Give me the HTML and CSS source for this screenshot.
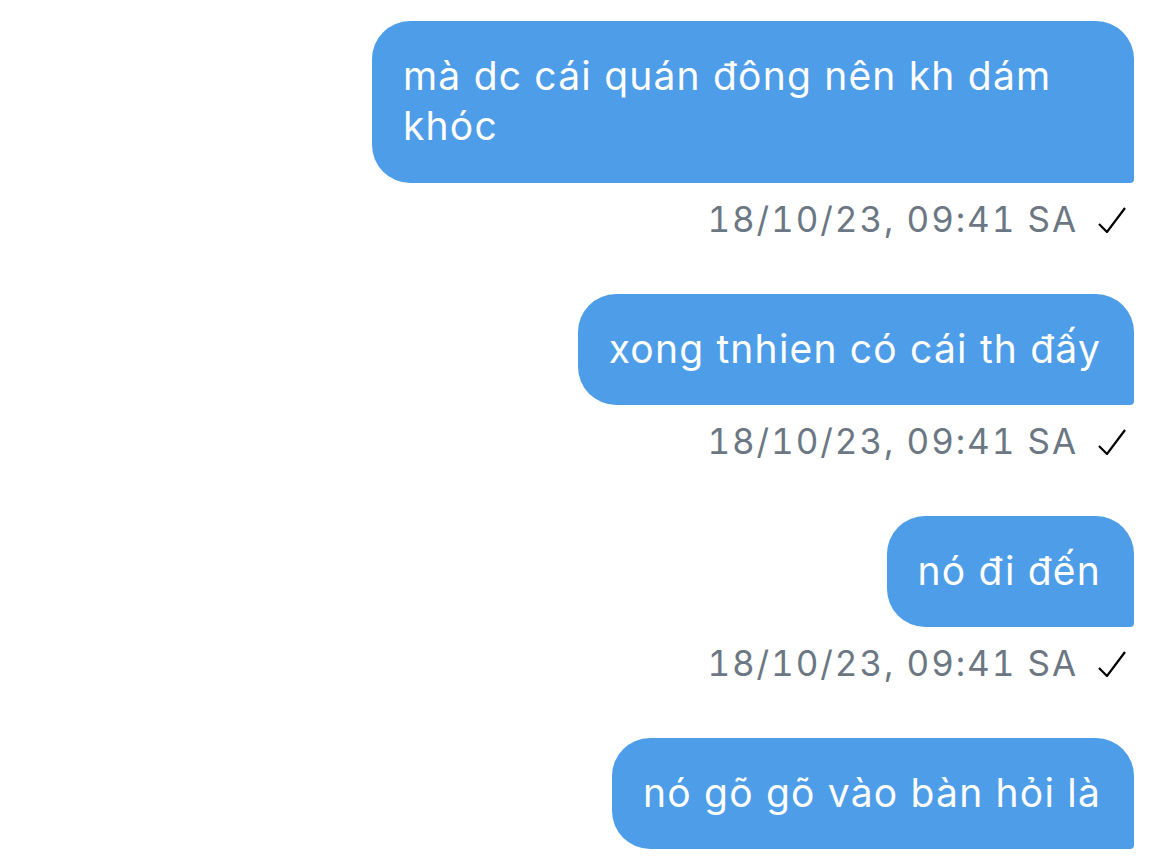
FILE: index.html
```html
<!DOCTYPE html>
<html lang="vi">
<head>
<meta charset="utf-8">
<link rel="stylesheet" href="styles.css">
</head>
<body>
<div class="chat">
  <div class="msg">
    <div class="bubble">mà dc cái quán đông nên kh dám khóc</div>
    <div class="meta"><span class="time">18/10/23, 09:41 SA</span><svg class="check" viewBox="0 0 28 26" width="28" height="26"><path d="M1 17 L9 25 L27 1" fill="none" stroke="#000" stroke-width="2.2"/></svg></div>
  </div>
  <div class="msg">
    <div class="bubble">xong tnhien có cái th đấy</div>
    <div class="meta"><span class="time">18/10/23, 09:41 SA</span><svg class="check" viewBox="0 0 28 26" width="28" height="26"><path d="M1 17 L9 25 L27 1" fill="none" stroke="#000" stroke-width="2.2"/></svg></div>
  </div>
  <div class="msg">
    <div class="bubble">nó đi đến</div>
    <div class="meta"><span class="time">18/10/23, 09:41 SA</span><svg class="check" viewBox="0 0 28 26" width="28" height="26"><path d="M1 17 L9 25 L27 1" fill="none" stroke="#000" stroke-width="2.2"/></svg></div>
  </div>
  <div class="msg">
    <div class="bubble">nó gõ gõ vào bàn hỏi là</div>
  </div>
</div>
</body>
</html>
```
FILE: styles.css
```css
html, body {
  margin: 0;
  background: #ffffff;
  overflow: hidden;
}
.chat {
  display: flex;
  flex-direction: column;
  align-items: flex-end;
  padding: 21px 36px 0 0;
  font-family: Inter, "Noto Sans", sans-serif;
}
.msg {
  display: flex;
  flex-direction: column;
  align-items: flex-end;
  margin-bottom: 55px;
}
.msg:last-child {
  margin-bottom: 0;
}
.bubble {
  box-sizing: border-box;
  max-width: 762px;
  background: #4e9de8;
  color: #ffffff;
  font-size: 39px;
  letter-spacing: 1.2px;
  line-height: 50px;
  padding: 30px 33px 31px 31px;
  border-radius: 38px 38px 4px 38px;
}
.msg:first-child .bubble {
  padding-bottom: 32px;
}
.meta {
  display: flex;
  align-items: center;
  gap: 20px;
  margin-top: 16px;
  height: 40px;
  padding-right: 8px;
}
.time {
  font-size: 35px;
  letter-spacing: 1.9px;
  font-variant-numeric: tabular-nums;
  color: #6c7784;
}
.check {
  display: block;
  margin-top: 2px;
}
```
